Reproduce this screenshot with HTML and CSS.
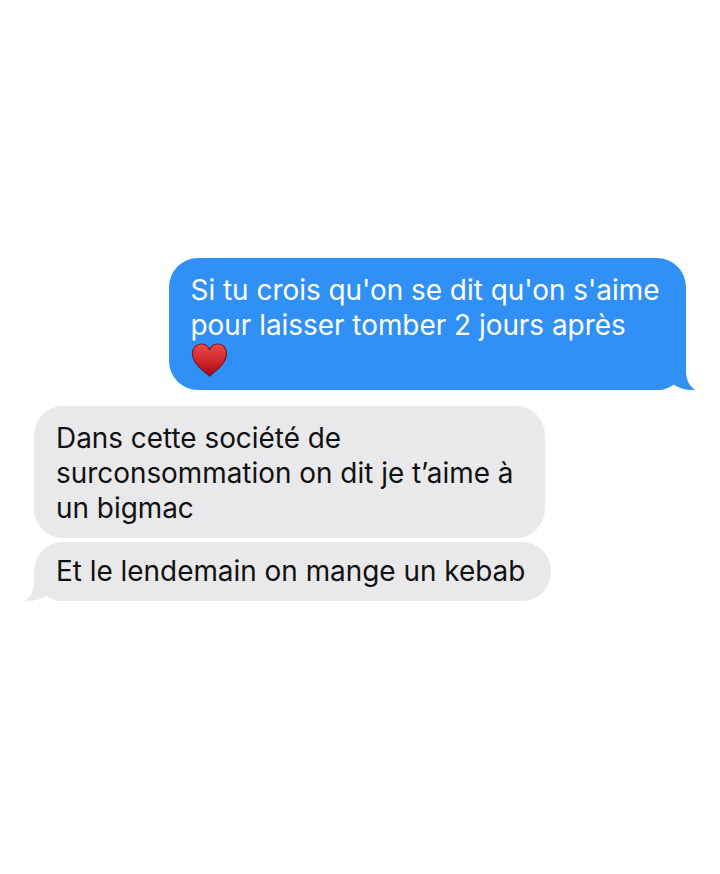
FILE: index.html
```html
<!DOCTYPE html>
<html lang="fr">
<head>
  <meta charset="UTF-8" />
  <meta name="viewport" content="width=device-width, initial-scale=1.0" />
  <title>Messages</title>
  <link rel="stylesheet" href="styles.css">
</head>
<body>

<div class="thread">
  <!-- Sent -->
  <div class="bubble sent">
    <div>Si tu crois qu'on se dit qu'on s'aime</div>
    <div>pour laisser tomber 2 jours après</div>
    <div class="emojiLine">
      <svg class="heart" width="38" height="35" viewBox="0 0 38 35">
        <defs>
          <linearGradient id="heartFill" x1="0" y1="0" x2="0" y2="1">
            <stop offset="0" stop-color="#ea4a48" />
            <stop offset="0.55" stop-color="#d0262a" />
            <stop offset="1" stop-color="#9c0c14" />
          </linearGradient>
        </defs>
        <path d="M18.500 33C13 28.500 1.500 20.500 1.500 10.500C1.500 4.800 5.400 1 10.200 1C14 1 17 3 18.500 6.400C20 3 23 1 26.800 1C31.600 1 35.500 4.800 35.500 10.500C35.500 20.500 24 28.500 18.500 33Z" fill="url(#heartFill)" stroke="#7d1a24" stroke-width="1.200" />
      </svg>
    </div>
    <svg class="tail tailSent" width="40" height="30" viewBox="0 0 40 30">
      <path d="M31 0V10C31 18 34 25 40 29C32 29.600 24 27.500 18 23C14 26 9 29 3 29L0 0Z" />
    </svg>
  </div>

  <!-- Received -->
  <div class="bubble received first">
    <div>Dans cette société de</div>
    <div>surconsommation on dit je t’aime à</div>
    <div>un bigmac</div>
  </div>
  <div class="bubble received second">
    <svg class="tail tailReceived" width="40" height="30" viewBox="0 0 40 30">
      <path d="M9 0V10C9 18 6 25 0 29C8 29.600 16 27.500 22 23C26 26 31 29 37 29L40 0Z" />
    </svg>
    <div class="lastLine">Et le lendemain on mange un kebab</div>
  </div>
</div>

</body>
</html>
```

FILE: styles.css
```css
* { box-sizing: border-box; }
body {
  margin: 0;
  background-color: #ffffff;
  font-family: Inter, 'Liberation Sans', sans-serif;
}

.thread {
  display: flex;
  flex-direction: column;
  height: 874px;
  padding: 258px 34px 0;
}

.bubble {
  position: relative;
  font-size: 27.9px;
  line-height: 35px;
  white-space: nowrap;
  border-radius: 29px;
}

.sent {
  align-self: flex-end;
  width: 517px;
  height: 132px;
  padding: 15px 22px 0 21.5px;
  background-color: #3090f5;
  color: #ffffff;
}

.received {
  padding-left: 22px;
  background-color: #e9e9eb;
  color: #111111;
}

.first {
  width: 511px;
  height: 132px;
  margin-top: 16px;
  padding-top: 15px;
}

.second {
  width: 517px;
  height: 59px;
  margin-top: 4px;
  padding-top: 12px;
}

.lastLine {
  position: relative;
}

.emojiLine {
  height: 35px;
}

.heart {
  display: block;
}

.tail {
  position: absolute;
  bottom: -1px;
}

.tailSent {
  right: -9px;
  fill: #3090f5;
}

.tailReceived {
  left: -9px;
  fill: #e9e9eb;
}
```
